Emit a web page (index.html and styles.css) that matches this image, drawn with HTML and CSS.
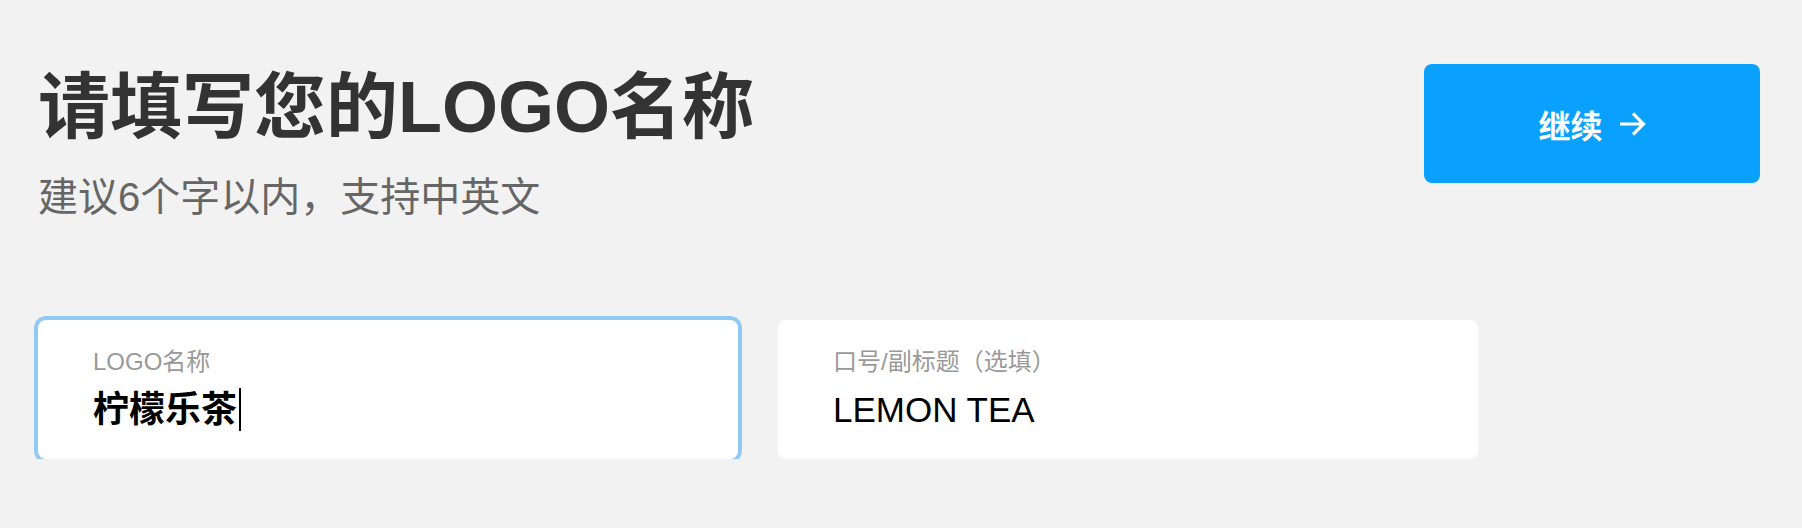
FILE: index.html
```html
<!DOCTYPE html>
<html lang="zh-CN">
<head>
    <meta charset="UTF-8">
    <meta name="viewport" content="width=device-width, initial-scale=1.0">
    <title>LOGO名称</title>
    <link rel="stylesheet" href="styles.css">
</head>
<body>
    <div class="page">
        <div class="top">
            <div class="intro">
                <h1 class="title">请填写您的LOGO名称</h1>
                <p class="hint">建议6个字以内，支持中英文</p>
            </div>
            <button class="next-btn">
                <span>继续</span>
                <svg class="arrow" width="27" height="24" viewBox="0 0 27 24">
                    <path d="M1 12 H24.5 M14 1.5 L24.5 12 L14 22.5" fill="none" stroke="#fff" stroke-width="3.2"/>
                </svg>
            </button>
        </div>

        <div class="fields">
            <div class="field active">
                <div class="field-label">LOGO名称</div>
                <div class="field-value cjk">柠檬乐茶<span class="caret"></span></div>
            </div>
            <div class="field">
                <div class="field-label">口号/副标题（选填）</div>
                <div class="field-value">LEMON TEA</div>
            </div>
        </div>
    </div>
</body>
</html>
```

FILE: styles.css
```css
body {
    margin: 0;
    background-color: #f2f2f2;
    font-family: "Liberation Sans", "Noto Sans CJK SC", sans-serif;
}
.page {
    padding: 64px 42px 0 38px;
}
.top {
    display: flex;
    justify-content: space-between;
    align-items: flex-start;
}
.title {
    margin: 7px 0 0 0;
    font-size: 72px;
    line-height: 72px;
    font-weight: bold;
    color: #333;
}
.hint {
    margin: 34px 0 0 0;
    font-size: 40px;
    line-height: 40px;
    color: #666;
}
.next-btn {
    width: 336px;
    height: 119px;
    display: flex;
    align-items: center;
    justify-content: center;
    gap: 16px;
    border: none;
    border-radius: 8px;
    background-color: #0aa1fe;
    color: white;
    font-family: "Liberation Sans", "Noto Sans CJK SC", sans-serif;
    font-size: 32px;
    font-weight: bold;
    cursor: pointer;
}
.arrow {
    display: block;
}
.fields {
    display: flex;
    gap: 40px;
    margin-top: 103px;
}
.field {
    width: 700px;
    height: 139px;
    box-sizing: border-box;
    padding: 30px 55px 0 55px;
    background-color: white;
    border-radius: 8px;
}
.field.active {
    box-shadow: 0 0 0 4px #90c9f5;
}
.field-label {
    font-size: 24px;
    line-height: 24px;
    color: #999;
}
.field-value {
    margin-top: 14px;
    font-size: 35px;
    line-height: 43px;
    color: #000;
}
.field-value.cjk {
    font-size: 36px;
    font-weight: bold;
}
.caret {
    display: inline-block;
    width: 2px;
    height: 43px;
    margin-left: 2px;
    background-color: #000;
    vertical-align: top;
}
```
